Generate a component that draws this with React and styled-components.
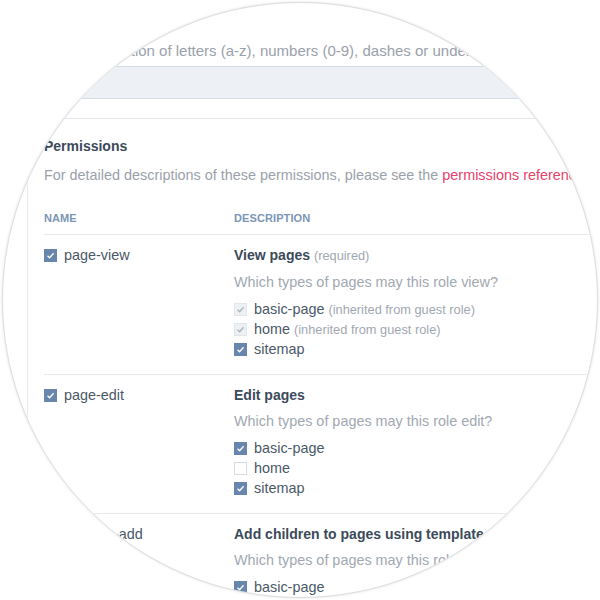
import React from "react";
import styled, { createGlobalStyle } from "styled-components";

const GlobalStyle = createGlobalStyle`
  html, body {
    margin: 0;
    padding: 0;
    background: #ffffff;
  }
  body {
    font-family: "Liberation Sans", Arial, sans-serif;
  }
`;

const Stage = styled.div`
  width: 600px;
  height: 600px;
  padding: 2px;
  box-sizing: border-box;
  background: #ffffff;
`;

const Lens = styled.div`
  width: 596px;
  height: 596px;
  box-sizing: border-box;
  border-radius: 50%;
  overflow: hidden;
  border: 1px solid #dedede;
  box-shadow: 0 0 3px rgba(0, 0, 0, 0.12);
  background: #ffffff;
`;

const Panel = styled.div`
  margin-left: 24px;
  width: 700px;
  min-height: 600px;
  border-left: 1px solid #e6eaef;
  padding-left: 16px;
  padding-top: 39px;
  box-sizing: border-box;
`;

const Hint = styled.div`
  font-size: 15px;
  line-height: 18px;
  color: #9aa1aa;
  white-space: nowrap;
`;

const Field = styled.div`
  margin-top: 6px;
  height: 31px;
  background: #edf1f5;
  border-top: 1px solid #d3dde8;
  border-bottom: 1px solid #d3dde8;
`;

const Divider = styled.div`
  margin-top: 19px;
  height: 1px;
  background: #e2e8ee;
  margin-left: -16px;
`;

const SectionTitle = styled.div`
  margin-top: 18px;
  font-size: 14px;
  line-height: 18px;
  font-weight: 700;
  color: #3b4a5a;
`;

const Lead = styled.div`
  margin-top: 11px;
  font-size: 14.4px;
  line-height: 18px;
  color: #9aa1aa;
  white-space: nowrap;
`;

const Link = styled.a`
  color: #e8416c;
  text-decoration: none;
`;

const Table = styled.div`
  margin-top: 26px;
`;

const Grid = styled.div`
  display: grid;
  grid-template-columns: 190px 1fr;
  border-bottom: 1px solid #e6eaee;
  padding: ${(p) => (p.$head ? "0 0 8px" : "11px 0 15px")};
`;

const HeadCell = styled.div`
  font-size: 11px;
  line-height: 16px;
  font-weight: 700;
  letter-spacing: 0.1px;
  color: #7b96b6;
`;

const NameCell = styled.label`
  display: flex;
  align-items: center;
  align-self: start;
  gap: 7px;
  height: 18px;
  padding-left: ${(p) => (p.$indent ? "18px" : "0")};
  font-size: 14.4px;
  color: #4a5867;
`;

const Title = styled.div`
  font-size: 14px;
  line-height: 18px;
  font-weight: 700;
  color: #3b4a5a;
  white-space: nowrap;
`;

const Note = styled.span`
  font-size: 12.8px;
  font-weight: 400;
  color: #a1a8b1;
`;

const Question = styled.div`
  margin-top: 7px;
  font-size: 14.4px;
  line-height: 20px;
  color: #a1a8b1;
  white-space: nowrap;
`;

const Options = styled.div`
  margin-top: 7px;
  display: flex;
  flex-direction: column;
`;

const Option = styled.label`
  display: flex;
  align-items: center;
  gap: 7px;
  height: 20px;
  font-size: 14.4px;
  color: #4a5867;
  white-space: nowrap;
`;

const Box = styled.span`
  flex: none;
  width: 13px;
  height: 13px;
  box-sizing: border-box;
  display: inline-flex;
  align-items: center;
  justify-content: center;
  border: 1px solid
    ${(p) =>
      p.$state === "on" ? "#6886ab" : p.$state === "inherited" ? "#e2e6eb" : "#d5dbe2"};
  background: ${(p) =>
    p.$state === "on" ? "#6886ab" : p.$state === "inherited" ? "#eef1f4" : "#ffffff"};
`;

const Check = ({ state }) => (
  <Box $state={state}>
    {state !== "off" && (
      <svg width="9" height="9" viewBox="0 0 9 9">
        <polyline
          points="1.5,4.8 3.6,6.8 7.6,2.2"
          fill="none"
          stroke={state === "on" ? "#ffffff" : "#a9b2bd"}
          strokeWidth="1.3"
        />
      </svg>
    )}
  </Box>
);

const rows = [
  {
    name: "page-view",
    title: "View pages",
    note: "(required)",
    verb: "view",
    options: [
      { label: "basic-page", state: "inherited", note: "(inherited from guest role)" },
      { label: "home", state: "inherited", note: "(inherited from guest role)" },
      { label: "sitemap", state: "on" },
    ],
  },
  {
    name: "page-edit",
    title: "Edit pages",
    verb: "edit",
    options: [
      { label: "basic-page", state: "on" },
      { label: "home", state: "off" },
      { label: "sitemap", state: "on" },
    ],
  },
  {
    name: "page-add",
    indent: true,
    title: "Add children to pages using template",
    verb: "add",
    options: [
      { label: "basic-page", state: "on" },
      { label: "home", state: "off" },
      { label: "sitemap", state: "on" },
    ],
  },
];

export default function App() {
  return (
    <>
      <GlobalStyle />
      <Stage>
        <Lens>
          <Panel>
            <Hint>
              Any combination of letters (a-z), numbers (0-9), dashes or underscores (no spaces).
            </Hint>
            <Field />
            <Divider />
            <SectionTitle>Permissions</SectionTitle>
            <Lead>
              For detailed descriptions of these permissions, please see the{" "}
              <Link href="#">permissions reference</Link>.
            </Lead>
            <Table>
              <Grid $head>
                <HeadCell>NAME</HeadCell>
                <HeadCell>DESCRIPTION</HeadCell>
              </Grid>
              {rows.map((r) => (
                <Grid key={r.name}>
                  <NameCell $indent={r.indent}>
                    <Check state="on" />
                    {r.name}
                  </NameCell>
                  <div>
                    <Title>
                      {r.title} {r.note && <Note>{r.note}</Note>}
                    </Title>
                    <Question>Which types of pages may this role {r.verb}?</Question>
                    <Options>
                      {r.options.map((o) => (
                        <Option key={o.label}>
                          <Check state={o.state} />
                          <span>
                            {o.label} {o.note && <Note>{o.note}</Note>}
                          </span>
                        </Option>
                      ))}
                    </Options>
                  </div>
                </Grid>
              ))}
            </Table>
          </Panel>
        </Lens>
      </Stage>
    </>
  );
}
